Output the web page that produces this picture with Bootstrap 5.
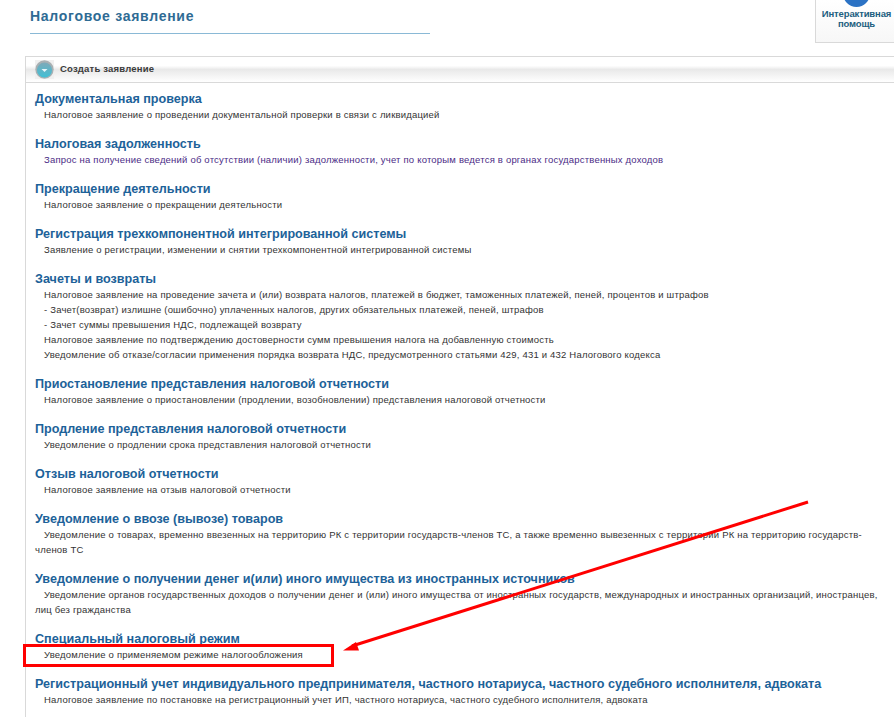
<!DOCTYPE html>
<html lang="ru"><head><meta charset="utf-8"><title>Налоговое заявление</title>
<link rel="stylesheet" href="https://cdn.jsdelivr.net/npm/bootstrap@5.3.0/dist/css/bootstrap.min.css">
<style>
html,body{height:717px;overflow:hidden}
body{background:#fff;font-family:"Liberation Sans",Arial,sans-serif;position:relative}
.pg-head{padding:8px 0 0 30px;height:56px}
.pg-title{font-size:14px;font-weight:700;color:#2e6b94;letter-spacing:.72px;line-height:17px;margin:0;padding-bottom:9px;border-bottom:1px solid #8ab9d6;width:400px;height:26px}
.help-box{position:absolute;right:0;top:-1px;width:79px;height:44px;border:1px solid #d9d9d9;border-right:0;background:linear-gradient(#fff,#f7f7f7);text-align:center;font-size:9.5px;font-weight:700;line-height:10px;color:#1d5f80;padding:9px 0 0 3px;letter-spacing:-.14px}
.help-dot{position:absolute;left:27px;top:-8px;width:27px;height:15px;border-radius:0 0 14px 14px;background:#2b72c4}
.panel-box{margin-left:25px;border-top:1px solid #d9d9d9;border-left:1px solid #d9d9d9;min-height:661px}
.panel-hd{height:26px;border-bottom:1px solid #d9d9d9;background:linear-gradient(#fff 0,#fff 35%,#e9e9e9 50%,#fff 100%);display:flex;align-items:center;gap:6px;padding-left:9px;font-size:9.5px;font-weight:700;color:#3b3b3b;letter-spacing:.2px}
.panel-body-x{padding:8px 9px 0}
.ent{margin-bottom:14px}
.ent-t{font-size:12.6px;font-weight:700;line-height:16px;color:#1d6299;margin:0}
.ent-d{font-size:9.5px;line-height:15px;color:#333;letter-spacing:.2px;margin:0;text-indent:9px}
.ent-d.v{color:#4b2c86}
.overlay{position:absolute;left:0;top:0;pointer-events:none}
</style></head><body>
<div class="pg-head"><h1 class="pg-title">Налоговое заявление</h1></div>
<div class="help-box"><span class="help-dot"></span>Интерактивная<br>помощь</div>
<div class="panel-box">
<div class="panel-hd"><svg width="19" height="19" viewBox="0 0 19 19"><defs><linearGradient id="gi" x1="0" y1="0" x2="0" y2="1"><stop offset="0" stop-color="#7fa9b8"/><stop offset="1" stop-color="#3fc0d6"/></linearGradient></defs><rect width="19" height="19" fill="#f0f0f0"/><circle cx="9.5" cy="9.5" r="9.2" fill="#a9b0b3"/><circle cx="9.5" cy="10" r="7.6" fill="url(#gi)"/><path d="M6.5 9h6l-3 3z" fill="#e6f6fa"/></svg><span>Создать заявление</span></div>
<div class="panel-body-x">
<div class="ent"><p class="ent-t">Документальная проверка</p><p class="ent-d">Налоговое заявление о проведении документальной проверки в связи с ликвидацией</p></div>
<div class="ent"><p class="ent-t">Налоговая задолженность</p><p class="ent-d v">Запрос на получение сведений об отсутствии (наличии) задолженности, учет по которым ведется в органах государственных доходов</p></div>
<div class="ent"><p class="ent-t">Прекращение деятельности</p><p class="ent-d">Налоговое заявление о прекращении деятельности</p></div>
<div class="ent"><p class="ent-t">Регистрация трехкомпонентной интегрированной системы</p><p class="ent-d">Заявление о регистрации, изменении и снятии трехкомпонентной интегрированной системы</p></div>
<div class="ent"><p class="ent-t">Зачеты и возвраты</p><p class="ent-d">Налоговое заявление на проведение зачета и (или) возврата налогов, платежей в бюджет, таможенных платежей, пеней, процентов и штрафов</p><p class="ent-d">- Зачет(возврат) излишне (ошибочно) уплаченных налогов, других обязательных платежей, пеней, штрафов</p><p class="ent-d">- Зачет суммы превышения НДС, подлежащей возврату</p><p class="ent-d">Налоговое заявление по подтверждению достоверности сумм превышения налога на добавленную стоимость</p><p class="ent-d">Уведомление об отказе/согласии применения порядка возврата НДС, предусмотренного статьями 429, 431 и 432 Налогового кодекса</p></div>
<div class="ent"><p class="ent-t">Приостановление представления налоговой отчетности</p><p class="ent-d">Налоговое заявление о приостановлении (продлении, возобновлении) представления налоговой отчетности</p></div>
<div class="ent"><p class="ent-t">Продление представления налоговой отчетности</p><p class="ent-d">Уведомление о продлении срока представления налоговой отчетности</p></div>
<div class="ent"><p class="ent-t">Отзыв налоговой отчетности</p><p class="ent-d">Налоговое заявление на отзыв налоговой отчетности</p></div>
<div class="ent"><p class="ent-t">Уведомление о ввозе (вывозе) товаров</p><p class="ent-d">Уведомление о товарах, временно ввезенных на территорию РК с территории государств-членов ТС, а также временно вывезенных с территории РК на территорию государств-членов ТС</p></div>
<div class="ent"><p class="ent-t">Уведомление о получении денег и(или) иного имущества из иностранных источников</p><p class="ent-d">Уведомление органов государственных доходов о получении денег и (или) иного имущества от иностранных государств, международных и иностранных организаций, иностранцев, лиц без гражданства</p></div>
<div class="ent"><p class="ent-t">Специальный налоговый режим</p><p class="ent-d">Уведомление о применяемом режиме налогообложения</p></div>
<div class="ent"><p class="ent-t">Регистрационный учет индивидуального предпринимателя, частного нотариуса, частного судебного исполнителя, адвоката</p><p class="ent-d">Налоговое заявление по постановке на регистрационный учет ИП, частного нотариуса, частного судебного исполнителя, адвоката</p></div>
</div></div>
<svg class="overlay" width="894" height="717" viewBox="0 0 894 717"><rect x="24.5" y="645.5" width="308" height="20" fill="none" stroke="#f00" stroke-width="3"/><path d="M808 502L352 646" stroke="#f00" stroke-width="3" fill="none"/><path d="M343 650.5L356 642L359 650.5Z" fill="#f00"/></svg>
</body></html>
